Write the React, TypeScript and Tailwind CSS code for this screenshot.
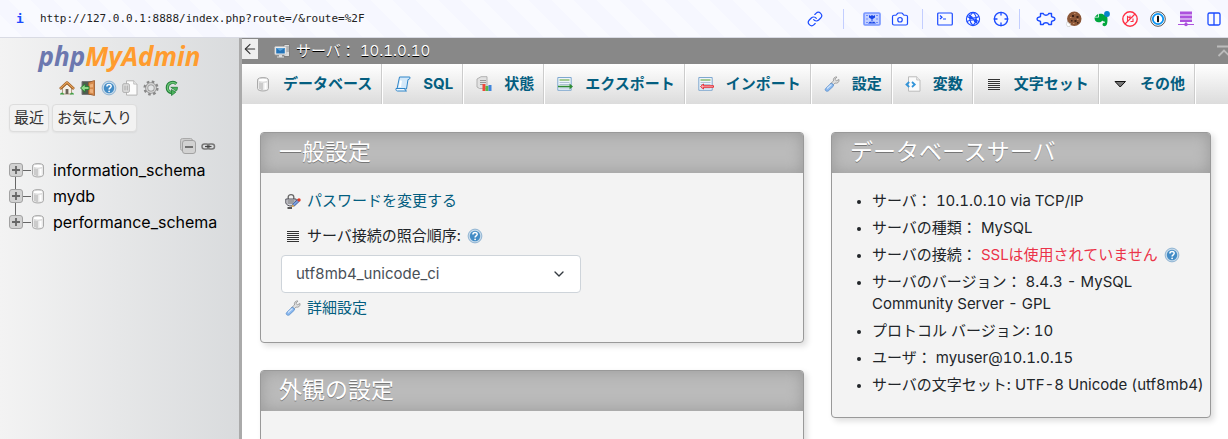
import React, { ReactNode } from 'react';
import { Camera, Crosshair, Link as LinkIcon, ChevronDown, ArrowLeft } from 'lucide-react';

const ico = 'block h-4 w-4 shrink-0';

function DbIcon() {
  return (
    <svg className={ico} viewBox="0 0 16 16">
      <path d="M2.5 4c0-3.3 11-3.3 11 0v8.500c0 3.300-11 3.300-11 0z" fill="#e9e9e9" stroke="#aaa" />
      <path d="M5 6.500v6.800M7 7v7" stroke="#c4c4c4" strokeWidth="1.600" />
      <path d="M10.500 6.800v6.500" stroke="#fff" strokeWidth="2" />
      <ellipse cx="8" cy="4.200" rx="5" ry="2" fill="#fff" stroke="#c4c4c4" strokeWidth=".7" />
    </svg>
  );
}
function HomeIcon() {
  return (
    <svg className={ico} viewBox="0 0 16 16">
      <path d="M3.500 8 8 3.800 12.500 8v6h-9z" fill="#f4efe6" stroke="#a28a6c" strokeWidth=".8" />
      <path d="M1 9 8 2.500 15 9" fill="none" stroke="#9a5a20" strokeWidth="2.600" strokeLinejoin="round" />
      <path d="M1.200 8.600 8 2.300l6.800 6.300" fill="none" stroke="#e9a65c" strokeWidth="1.200" />
      <path d="M6.600 9h2.800v5H6.600z" fill="#6c6258" />
      <path d="M1 14.500c0-2.500 4-2.500 4 0zM11 14.500c0-2.500 4-2.500 4 0z" fill="#3fa045" />
    </svg>
  );
}
function ExitIcon() {
  return (
    <svg className={ico} viewBox="0 0 16 16">
      <path d="M2 1.500h10v13H2z" fill="#4f5d50" stroke="#777" />
      <path d="M8.500 2.500 14.500.5v15l-6-1.500z" fill="#d58a4c" stroke="#99582a" strokeWidth=".8" />
      <path d="M10 4.500 13 3.800v3.400l-3 .4zM10 9l3 .2v4l-3-.7z" fill="#edb17c" />
      <path d="M.5 8 5 4v2.500h4v3H5V12z" fill="#8fd88a" stroke="#26802f" strokeWidth=".9" />
    </svg>
  );
}
function HelpIcon() {
  return (
    <svg className={ico} viewBox="0 0 16 16">
      <circle cx="8" cy="8" r="6.900" fill="#c6daea" stroke="#7fa8cb" strokeWidth=".8" />
      <circle cx="8" cy="8" r="5.200" fill="#438cc6" />
      <path d="M5.900 6.500c0-2.800 4.300-2.700 4.300-.2 0 1.500-2.100 1.500-2.100 3.100" fill="none" stroke="#fff" strokeWidth="1.500" />
      <circle cx="8.100" cy="11.300" r=".9" fill="#fff" />
    </svg>
  );
}
function DocIcon() {
  return (
    <svg className={ico} viewBox="0 0 16 16">
      <path d="M4.500.8h7.200l3.300 3.300v11H4.500z" fill="#fcfcfc" stroke="#b5b5b5" />
      <path d="M11.700.8v3.300H15" fill="#e8e8e8" stroke="#b5b5b5" strokeWidth=".8" />
      <rect x=".8" y="3.800" width="6.500" height="8.500" rx="1" fill="#e4e4e4" stroke="#aaa" />
      <path d="M3 5.500v5M5.200 5.500v5" stroke="#a0a0a0" />
    </svg>
  );
}
function GearIcon() {
  return (
    <svg className={ico} viewBox="0 0 16 16">
      <circle cx="8" cy="8" r="6.300" fill="none" stroke="#888" strokeWidth="2.600" strokeDasharray="2.500 2.450" />
      <circle cx="8" cy="8" r="4.300" fill="none" stroke="#929292" strokeWidth="3" />
      <circle cx="8" cy="8" r="4.300" fill="none" stroke="#d2d2d2" strokeWidth="1.500" />
    </svg>
  );
}
function ReloadIcon() {
  return (
    <svg className={ico} viewBox="0 0 16 16">
      <path d="M12.300 3.800C9.500.9 3.300 2.300 3.300 7.800c0 2.600 1.700 4.400 4.500 4.900" fill="none" stroke="#23803a" strokeWidth="3.200" />
      <path d="M12 3.800C9.500 1.300 3.500 2.500 3.500 7.800c0 2.400 1.600 4.100 4.300 4.600" fill="none" stroke="#6cc576" strokeWidth="1.400" />
      <path d="M7.500 9.500V15.500L11.700 12.300z" fill="#4bb35c" stroke="#23803a" strokeWidth=".8" />
      <path d="M6.800 7.300h6.700c0 1.700-.5 3-1.500 4L9.500 9z" fill="#4bb35c" stroke="#23803a" strokeWidth=".8" />
    </svg>
  );
}
function ServerIcon() {
  return (
    <svg className={ico} viewBox="0 0 16 16">
      <path d="M10 1.500h5.500v12H10z" fill="#dcdcdc" stroke="#707070" strokeWidth=".8" />
      <path d="M11 4h4M11 6h4M11 8h4" stroke="#777" strokeWidth=".8" />
      <rect x=".8" y="3.500" width="11.400" height="8.300" rx=".8" fill="#eee" stroke="#bbb" strokeWidth=".6" />
      <path d="M2.200 5h8.600v5.500H2.200z" fill="#2474b8" />
      <path d="M2.200 5h8.600L6 8z" fill="#5aa2da" />
      <path d="M5 12h3v1.500h2v1H3v-1h2z" fill="#ddd" />
    </svg>
  );
}
function SqlIcon() {
  return (
    <svg className={ico} viewBox="0 0 16 16">
      <path d="M4.500 1h10.300c.8 1.500-.6 2.600-1.800 2.500L11.500 13H2z" fill="#d4e9fa" stroke="#2f86c9" strokeLinejoin="round" />
      <path d="M6 4.500 5 11" stroke="#fff" strokeWidth="2" />
      <path d="M1 12.500h9c-.3 1.500.3 2.300 1.500 2.500H2.500C1.200 15 .7 13.800 1 12.500z" fill="#f2f9ff" stroke="#2f86c9" strokeLinejoin="round" />
    </svg>
  );
}
function StatusIcon() {
  return (
    <svg className={ico} viewBox="0 0 16 16">
      <path d="M1 3 5 .7h6v11.800H3.500L1 11z" fill="#e2e2e2" stroke="#aaa" strokeWidth=".9" />
      <path d="M4 4.500h6M4 6.500h6M4 8.500h3" stroke="#999" />
      <path d="M6.500 8h3v7h-3z" fill="#ef4a3a" />
      <path d="M9.500 10h3v5h-3z" fill="#54b948" />
      <path d="M12.500 9h3v6h-3z" fill="#3f86dd" />
    </svg>
  );
}
function SheetIcon({ incoming = false }: { incoming?: boolean }) {
  return (
    <svg className={ico} viewBox="0 0 16 16">
      <path d="M.8 1.500h13.400v12.800H.8z" fill="#eef5fb" stroke="#7fa8cf" />
      <path d="M2.500 4h10" stroke="#7cb35a" strokeWidth="1.300" />
      <path d="M2.500 6.500h10M2.500 8.500h10M2.500 12h10" stroke="#9db5cc" strokeWidth=".8" />
      {incoming ? (
        <path d="M2.500 10.500 5.500 8v1.700h10v1.600h-10V13z" fill="#ffb3b3" stroke="#e5252e" strokeWidth=".9" />
      ) : (
        <path d="M16 10.500 12.500 7.500v2.200H1v1.600h11.500v2.200z" fill="#2f8c35" />
      )}
    </svg>
  );
}
function WrenchIcon() {
  return (
    <svg className={ico} viewBox="0 0 16 16">
      <path d="M6 8 9.500 5C8.800 2.500 10.700.5 13 1L11 3.200l1.300 1.700L15 3.500c.5 2.500-1.600 4.300-4 3.600L8 10z" fill="#e0e0e0" stroke="#999" strokeWidth=".9" />
      <path d="m1.600 12.600 5.200-5c1.700-.4 3.200 1 2.500 2.600l-5 4.700c-2 1-3.900-.6-2.700-2.300z" fill="#8cbaf0" stroke="#5f92ce" strokeWidth=".9" />
      <path d="m3 12.500 4.500-4" stroke="#d4e6fb" strokeWidth="1.200" />
    </svg>
  );
}
function VarsIcon() {
  return (
    <svg className={ico} viewBox="0 0 16 16">
      <path d="M3.500.8h8.200L15 4v11.200H3.500z" fill="#fbfbfb" stroke="#bbb" />
      <path d="M11.700.8V4H15" fill="#eee" stroke="#bbb" strokeWidth=".8" />
      <path d="M4.200 6 1.500 8.500 4.200 11M7 6l2.700 2.500L7 11" fill="none" stroke="#3294d9" strokeWidth="1.800" />
    </svg>
  );
}
function LinesIcon() {
  return (
    <svg className={ico} viewBox="0 0 16 16">
      <path d="M2 3.500h12M2 5.500h12M2 7.500h12M2 9.500h12M2 11.500h12M2 13.500h12" stroke="#333" shapeRendering="crispEdges" />
    </svg>
  );
}
function MoreIcon() {
  return (
    <svg className={ico} viewBox="0 0 16 16">
      <path d="M3 5.500h10.500L8.200 11z" fill="#777" stroke="#111" />
    </svg>
  );
}
function PasswordIcon() {
  return (
    <svg className={ico} viewBox="0 0 16 16">
      <path d="M3.200 6V4c0-3.300 5.600-3.300 5.600 0v2" fill="none" stroke="#666" strokeWidth="1.300" />
      <path d="M.8 6h10.400v4c-1 2.500-3 3-5.200 3S1.500 12 .8 10z" fill="#d5d5dc" stroke="#44444c" strokeWidth=".9" />
      <path d="M2.500 8h7M2.500 10h6" stroke="#666" />
      <path d="m7 13.500 1-2.800 5-4.400 1.700 1.700-5 4.700z" fill="#7aa1e0" stroke="#38508c" strokeWidth=".8" />
      <circle cx="14" cy="6.900" r="1.700" fill="#e23a25" />
      <path d="m6.500 14.300 1-2.900 2 1.900z" fill="#f2b24a" />
      <path d="M2.500 15h4.500" stroke="#111" strokeWidth="1.400" />
    </svg>
  );
}
function TreeBox({ minus = false }: { minus?: boolean }) {
  return (
    <svg className={ico} viewBox="0 0 16 16">
      {minus && <rect x=".5" y=".5" width="12" height="12" rx="2" fill="#ccc" stroke="#aaa" />}
      <rect x={minus ? 2.5 : 1.5} y={minus ? 2.5 : 1.5} width="13" height="13" rx="2.500" fill="#d2d2d2" stroke="#a2a2a2" />
      <path d={minus ? 'M5 9h8' : 'M4 8h8M8 4v8'} stroke="#666" strokeWidth="1.800" />
    </svg>
  );
}
function ChainIcon() {
  return (
    <svg className={ico} viewBox="0 0 16 16" fill="none">
      <rect x="2" y="6" width="7" height="5" rx="2.500" stroke="#777" strokeWidth="1.500" />
      <rect x="7.500" y="6" width="7" height="5" rx="2.500" stroke="#777" strokeWidth="1.500" />
      <path d="M5 8.500h6.500" stroke="#444" strokeWidth="1.200" />
    </svg>
  );
}

/* Browser toolbar glyphs */
function ImageIcon() {
  return (
    <svg className="h-4 w-5" viewBox="0 0 20 16">
      <rect x="2" y="2" width="16" height="12" rx="1" fill="#c3d0ff" stroke="#7795ff" strokeWidth="1.600" />
      <path d="M4 4.500h2M14 4.500h2M4 8h2M14 8h2M4 11.500h2M14 11.500h2" stroke="#6d8cff" />
      <path d="M7 4l1.500 1L10 4l1.500 1L13 4v2.500L10 8.500 7 6.500zM9.500 8h1v2.500h-1zM6 12.500l2-2 2 1 2-1 2 2z" fill="#1745e8" />
    </svg>
  );
}
function TerminalIcon() {
  return (
    <svg className="h-4 w-4" viewBox="0 0 16 16" fill="none" stroke="#1b4bff" strokeWidth="1.200">
      <rect x=".7" y="2" width="14.600" height="12" rx="1" />
      <path d="m3 4.500 2 1.700L3 8M6 8h3" />
    </svg>
  );
}
function GlobeIcon() {
  return (
    <svg className="h-4 w-4" viewBox="0 0 16 16" fill="none" stroke="#1b4bff" strokeWidth="1.100">
      <circle cx="8" cy="8" r="6.600" />
      <path d="M2 5.500c3 2 9 2 12 0M2 10.500c3-2 9-2 12 0M8 1.400C3.500 5 4 11 8 14.600M8 1.400c4.500 3.600 4 9.600 0 13.200M3.500 3.500l9 9" />
      <circle cx="6" cy="6.700" r="1.200" fill="#1b4bff" />
      <circle cx="10.500" cy="9.700" r="1.200" fill="#1b4bff" />
    </svg>
  );
}
function PuzzleIcon() {
  return (
    <svg className="h-4 w-5" viewBox="0 0 20 16" fill="none" stroke="#1b4bff" strokeWidth="1.400" strokeLinejoin="round">
      <path d="M4.500 2.500h2.800c.4 2.300 5 2.300 5.400 0h2.800v3c0 .8 3.500.2 3.500 2.500s-3.500 1.700-3.500 2.500v3h-2.800c-.4-2.300-5-2.300-5.400 0H4.500v-3C4.500 9.700 1 10.300 1 8s3.500-1.700 3.500-2.500z" />
    </svg>
  );
}
function CookieIcon() {
  return (
    <svg className="h-4 w-4" viewBox="0 0 16 16">
      <circle cx="8.300" cy="7.800" r="7.200" fill="#8b5638" />
      <path d="M6 4h2v2H6zM10.500 5h2v2h-2zM8.500 9h2v2h-2zM5 9h1.500v1.500H5zM11 11h1.500v1.500H11z" fill="#3c2117" />
      <path d="M8 2.500h1.500M4 6.500h1.500M11 8.500h1.500M7 12.500h1.500" stroke="#c58d66" />
      <path d="M1 11h1.500v1.200l2 .3-.5 3H1.500L.5 13.500z" fill="#fff" stroke="#bbb" strokeWidth=".5" />
    </svg>
  );
}
function ElephantIcon() {
  return (
    <svg className="h-4 w-4" viewBox="0 0 16 16">
      <path d="M5 3c2-.7 4-.2 5 .8 2 0 3.200.7 3.400 3 .3 3 0 5.500-.7 7-.7 1.800-4.200 1.900-4.200-.3 0-1.600 1.500-1.900 2.400-1.500v-1.200c-1.300-.2-2.300-.6-2.700-1.300-.6 1.500-2 2-4.200 1.700C1.500 10.800.5 9 .5 6.500H4c.8 0 1-.4 1-1z" fill="#00a63d" />
      <path d="M.8 5.700 4.200 2.700v3z" fill="#00a63d" />
      <circle cx="13" cy="3" r="2.900" fill="#0884cb" />
    </svg>
  );
}
function BlockedIcon() {
  return (
    <svg className="h-4 w-4" viewBox="0 0 16 16" fill="none" stroke="#ff3045">
      <circle cx="8" cy="8" r="7.200" strokeWidth="1.400" />
      <path d="M5.500 10.500v-5L8 7M8 4.500v3l3-2M11 7.500v3H8.500M13 3 3 13" strokeWidth="1.100" />
    </svg>
  );
}
function KeyholeIcon() {
  return (
    <svg className="h-4 w-4" viewBox="0 0 16 16">
      <circle cx="8" cy="8" r="7.300" fill="#fff" stroke="#555" />
      <circle cx="8" cy="8" r="5.200" fill="#fff" stroke="#0a94f5" strokeWidth="1.800" />
      <rect x="7" y="4.800" width="2" height="6.400" rx=".6" fill="#111" />
    </svg>
  );
}
function StackIcon() {
  return (
    <svg className="h-4 w-4" viewBox="0 0 16 16">
      <path d="M2 .5h12v3H2zM2 4.500h12v3H2zM2 8.500h12v2.500H2z" fill="#ad52dd" />
      <path d="M8 11v2.500M0 13.500h16" stroke="#ad52dd" />
      <circle cx="8" cy="13.500" r="1.800" fill="#ad52dd" />
    </svg>
  );
}
function PanelIcon() {
  return (
    <svg className="h-4 w-4" viewBox="0 0 16 16" fill="none" stroke="#1b4bff" strokeWidth="1.300">
      <rect x="2" y="2" width="12" height="12" rx="1.500" />
      <path d="M8 2v12" />
    </svg>
  );
}

function BarButton({ label, children }: { label: string; children: ReactNode }) {
  return (
    <button type="button" aria-label={label} className="flex h-4 w-5 items-center justify-center text-[#1b4bff]">
      {children}
    </button>
  );
}
const Divider = ({ className }: { className: string }) => <span className={'h-5 w-px bg-[#c3ceff] ' + className} />;

function BrowserBar() {
  return (
    <header className="flex h-[38px] items-center border-b border-[#d9dbe4] bg-[repeating-linear-gradient(45deg,#f9faff_0_16px,#f6f7ff_16px_32px)]">
      <span className="w-10 text-center font-['DejaVu_Sans_Mono',monospace] text-[13px] font-bold text-[#1b4bff]">i</span>
      <span className="pt-0.5 font-['DejaVu_Sans_Mono',monospace] text-[11px] text-[#222]">http://127.0.0.1:8888/index.php?route=/&amp;route=%2F</span>
      <div className="ml-auto flex items-center gap-2 pr-1">
        <BarButton label="リンクをコピー"><LinkIcon className="h-4 w-4" strokeWidth={1.8} /></BarButton>
        <Divider className="mx-2.5" />
        <BarButton label="画像"><ImageIcon /></BarButton>
        <BarButton label="スクリーンショット"><Camera className="h-[18px] w-[18px]" strokeWidth={1.6} /></BarButton>
        <Divider className="mx-1" />
        <BarButton label="ターミナル"><TerminalIcon /></BarButton>
        <BarButton label="ネットワーク"><GlobeIcon /></BarButton>
        <BarButton label="位置"><Crosshair className="h-4 w-4" strokeWidth={2} /></BarButton>
        <Divider className="mr-2" />
        <BarButton label="拡張機能"><PuzzleIcon /></BarButton>
        <BarButton label="Cookie"><CookieIcon /></BarButton>
        <BarButton label="ノート"><ElephantIcon /></BarButton>
        <BarButton label="ブロック"><BlockedIcon /></BarButton>
        <BarButton label="パスワード管理"><KeyholeIcon /></BarButton>
        <BarButton label="プロキシ"><StackIcon /></BarButton>
        <BarButton label="分割表示"><PanelIcon /></BarButton>
      </div>
    </header>
  );
}

const databases = ['information_schema', 'mydb', 'performance_schema'];

function Sidebar() {
  return (
    <aside className="w-[242px] shrink-0 border-r-[3px] border-[#aaa] bg-linear-to-r from-[#f3f3f3] to-[#d9dbdd]">
      <a href="#home" className="flex h-9 items-center justify-center font-['Open_Sans',sans-serif] text-[26px] font-bold italic">
        <span className="text-[#6c78af]">php</span>
        <span className="text-[#ff9c2f]">MyAdmin</span>
      </a>
      <nav className="mt-1.5 flex justify-center gap-[5px]">
        <a href="#home" aria-label="ホーム"><HomeIcon /></a>
        <a href="#logout" aria-label="ログアウト"><ExitIcon /></a>
        <a href="#docs" aria-label="ヘルプ"><HelpIcon /></a>
        <a href="#mysql" aria-label="ドキュメント"><DocIcon /></a>
        <a href="#settings" aria-label="設定"><GearIcon /></a>
        <a href="#reload" aria-label="再読み込み"><ReloadIcon /></a>
      </nav>
      <div className="mt-2 flex gap-[3px] pl-[9px]">
        <button type="button" className="h-7 rounded border border-[#ddd] bg-[#f2f2f2] px-1 text-[15px] text-[#333] shadow-xs">最近</button>
        <button type="button" className="h-7 rounded border border-[#ddd] bg-[#f2f2f2] px-1 text-[15px] text-[#333] shadow-xs">お気に入り</button>
      </div>
      <div className="mt-1.5 flex justify-end gap-1 pr-[23px]">
        <button type="button" aria-label="すべて折りたたむ"><TreeBox minus /></button>
        <button type="button" aria-label="メインパネルとリンク"><ChainIcon /></button>
      </div>
      <ul className="mt-[3px] pl-2">
        {databases.map((name, i) => (
          <li key={name} className="relative flex h-[26px] items-center text-[16px] text-black">
            {i > 0 && <span className="absolute -top-1.5 left-[7px] h-3 w-px bg-[#666]" />}
            <button type="button" aria-label="展開"><TreeBox /></button>
            <span className="-mx-px h-px w-2 bg-[#666]" />
            <DbIcon />
            <a href={'#' + name} className="ml-[7px]">{name}</a>
          </li>
        ))}
      </ul>
    </aside>
  );
}

const tabs: { label: string; icon: ReactNode }[] = [
  { label: 'データベース', icon: <DbIcon /> },
  { label: 'SQL', icon: <SqlIcon /> },
  { label: '状態', icon: <StatusIcon /> },
  { label: 'エクスポート', icon: <SheetIcon /> },
  { label: 'インポート', icon: <SheetIcon incoming /> },
  { label: '設定', icon: <WrenchIcon /> },
  { label: '変数', icon: <VarsIcon /> },
  { label: '文字セット', icon: <LinesIcon /> },
  { label: 'その他', icon: <MoreIcon /> },
];

function Card({ title, children }: { title: string; children?: ReactNode }) {
  return (
    <section className="rounded border border-[#999] bg-[#f3f3f3] shadow-[3px_3px_6px_#ddd]">
      <h2 className="h-10 rounded-t-[3px] bg-[#bbb] px-[18px] text-[23px] leading-[38px] text-white shadow-[inset_0_0_15px_#999] [text-shadow:0_1px_0_#777]">{title}</h2>
      {children}
    </section>
  );
}

const link = 'text-[#045e80]';

export default function App() {
  return (
    <div className="flex h-screen flex-col overflow-hidden bg-white font-['Inter','Noto_Sans_CJK_JP',sans-serif] text-[15px] text-[#212529] tabular-nums">
      <BrowserBar />
      <div className="flex min-h-0 flex-1">
        <Sidebar />
        <main className="min-w-0 flex-1 overflow-hidden">
          <div className="flex h-[26px] items-center bg-[#888] text-white">
            <button type="button" aria-label="パネルを隠す" className="mb-1 flex h-5 w-4 items-center bg-[#eee] text-[#333]">
              <ArrowLeft className="h-4 w-4" strokeWidth={1.6} />
            </button>
            <a href="#server" className="ml-4 flex items-center gap-1.5 [text-shadow:0_1px_0_#000]">
              <ServerIcon />
              <span>サーバ： 10.1.0.10</span>
            </a>
            <svg className="-mr-1 ml-auto h-4 w-4" viewBox="0 0 16 16" fill="none" stroke="#bbb" strokeWidth="1.800">
              <path d="M1 3.500h14M2.500 13 8 7.500l5.500 5.500" />
            </svg>
          </div>
          <nav className="flex h-10 bg-linear-to-b from-white to-[#dcdcdc] font-bold text-[#045e80]">
            {tabs.map((t) => (
              <a key={t.label} href={'#' + t.label} className="flex shrink-0 items-center gap-3 border-r border-[#ccc] pr-[9px] pl-[13px] shadow-[1px_0_0_#fff]">
                {t.icon}
                <span>{t.label}</span>
              </a>
            ))}
          </nav>
          <div className="flex items-start gap-[27px] pt-[28px] pr-[17px] pl-[18px]">
            <div className="flex min-w-0 flex-1 flex-col gap-[27px]">
              <Card title="一般設定">
                <div className="flex flex-col px-5 pt-4 pb-[22px]">
                  <div className="flex h-6 items-center gap-1.5 pl-1"><PasswordIcon /><a href="#password" className={link}>パスワードを変更する</a></div>
                  <div className="mt-[11px] flex h-6 items-center gap-1.5 pl-1">
                    <LinesIcon />
                    <label htmlFor="collation">サーバ接続の照合順序:</label>
                    <a href="#collation-help" aria-label="ヘルプ"><HelpIcon /></a>
                  </div>
                  <div className="relative mt-[7px] w-[300px]">
                    <select id="collation" className="block h-[38px] w-full appearance-none rounded border border-[#ced4da] bg-white px-3.5 text-[#495057]">
                      <option>utf8mb4_unicode_ci</option>
                    </select>
                    <ChevronDown className="pointer-events-none absolute top-[11px] right-3.5 h-4 w-4 text-[#343a40]" />
                  </div>
                  <div className="mt-[3px] flex h-6 items-center gap-1.5 pl-1"><WrenchIcon /><a href="#more" className={link}>詳細設定</a></div>
                </div>
              </Card>
              <Card title="外観の設定"><div className="h-20" /></Card>
            </div>
            <div className="w-[380px] shrink-0">
              <Card title="データベースサーバ">
                <ul className="flex list-disc flex-col gap-[5px] pt-[17px] pr-1 pb-[21px] pl-10 leading-[22px] marker:text-[12px]">
                  <li>サーバ： 10.1.0.10 via TCP/IP</li>
                  <li>サーバの種類： MySQL</li>
                  <li>サーバの接続： <span className="text-[#eb3349]">SSLは使用されていません</span><a href="#ssl-help" aria-label="ヘルプ" className="ml-1.5 inline-block align-[-3px]"><HelpIcon /></a></li>
                  <li>サーバのバージョン： 8.4.3 - MySQL Community Server - GPL</li>
                  <li>プロトコル バージョン: 10</li>
                  <li>ユーザ： myuser@10.1.0.15</li>
                  <li>サーバの文字セット: UTF-8 Unicode (utf8mb4)</li>
                </ul>
              </Card>
            </div>
          </div>
        </main>
      </div>
    </div>
  );
}
